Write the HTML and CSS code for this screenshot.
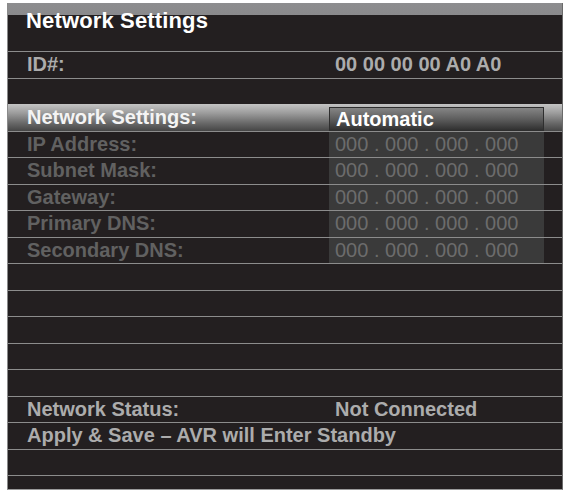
FILE: index.html
```html
<!DOCTYPE html>
<html>
<head>
<meta charset="utf-8">
<link rel="stylesheet" href="styles.css">
</head>
<body>
<div class="panel">
  <div class="header"><span class="title">Network Settings</span></div>
  <div class="row"><span class="label lit">ID#:</span><span class="value lit">00 00 00 00 A0 A0</span></div>
  <div class="row"></div>
  <div class="row selected"><span class="label sel">Network Settings:</span><span class="box-auto">Automatic</span></div>
  <div class="row"><span class="label dim">IP Address:</span><span class="box-ip">000 . 000 . 000 . 000</span></div>
  <div class="row"><span class="label dim">Subnet Mask:</span><span class="box-ip">000 . 000 . 000 . 000</span></div>
  <div class="row"><span class="label dim">Gateway:</span><span class="box-ip">000 . 000 . 000 . 000</span></div>
  <div class="row"><span class="label dim">Primary DNS:</span><span class="box-ip">000 . 000 . 000 . 000</span></div>
  <div class="row"><span class="label dim">Secondary DNS:</span><span class="box-ip">000 . 000 . 000 . 000</span></div>
  <div class="row"></div>
  <div class="row"></div>
  <div class="row"></div>
  <div class="row"></div>
  <div class="row"></div>
  <div class="row"><span class="label lit">Network Status:</span><span class="value lit">Not Connected</span></div>
  <div class="row"><span class="label lit wide">Apply &amp; Save – AVR will Enter Standby</span></div>
  <div class="row"></div>
  <div class="row filler"></div>
</div>
</body>
</html>
```
FILE: styles.css
```css
html, body {
  margin: 0;
  padding: 0;
  background: #ffffff;
}
body {
  font-family: "Liberation Sans", Arial, Helvetica, sans-serif;
}
.panel {
  box-sizing: border-box;
  margin: 3px 0 0 7px;
  width: 556px;
  height: 487px;
  background: #231f20;
  border-left: 1px solid #8a8a8a;
  border-right: 1px solid #6a6a6a;
  border-bottom: 1px solid #9a9a9a;
  display: flex;
  flex-direction: column;
}
.header {
  height: 48px;
  flex: none;
  background: linear-gradient(#8d8d8f 0, #8a8a8c 12px, #231f20 12px);
  padding-left: 18px;
  box-sizing: border-box;
}
.title {
  display: block;
  color: #ffffff;
  font-weight: bold;
  font-size: 22px;
  letter-spacing: 0.15px;
  line-height: 24px;
  padding-top: 6px;
}
.row {
  box-sizing: border-box;
  height: 26.5px;
  flex: none;
  border-top: 1px solid #8c8c8c;
  display: flex;
  align-items: center;
}
.row.filler {
  flex: 1;
  height: auto;
}
.label {
  box-sizing: border-box;
  width: 321px;
  flex: none;
  padding-left: 19px;
  font-weight: bold;
  font-size: 20px;
  white-space: nowrap;
}
.label.wide {
  width: auto;
}
.value {
  padding-left: 6px;
  font-weight: bold;
  font-size: 20px;
  white-space: nowrap;
}
.lit {
  color: #acacac;
}
.dim {
  color: #616161;
}
.sel {
  color: #f4f4f4;
}
.row.selected {
  border-top: none;
  background: linear-gradient(#c4c4c4 0%, #9a9a9a 35%, #6a6a6a 70%, #454545 100%);
  align-items: flex-end;
}
.row.selected .label {
  align-self: center;
  padding-top: 1px;
}
.box-auto {
  box-sizing: border-box;
  width: 215px;
  height: 24px;
  flex: none;
  border: 1px solid #2e2e2e;
  background: linear-gradient(#858585 0%, #5e5e5e 50%, #303030 100%);
  color: #ffffff;
  font-weight: bold;
  font-size: 20px;
  line-height: 22px;
  padding-left: 6px;
  white-space: nowrap;
}
.box-ip {
  box-sizing: border-box;
  width: 215px;
  flex: none;
  align-self: stretch;
  background: #3a3a3a;
  color: #6c6c6c;
  font-size: 20px;
  padding-left: 6px;
  display: flex;
  align-items: center;
  white-space: nowrap;
}
```
